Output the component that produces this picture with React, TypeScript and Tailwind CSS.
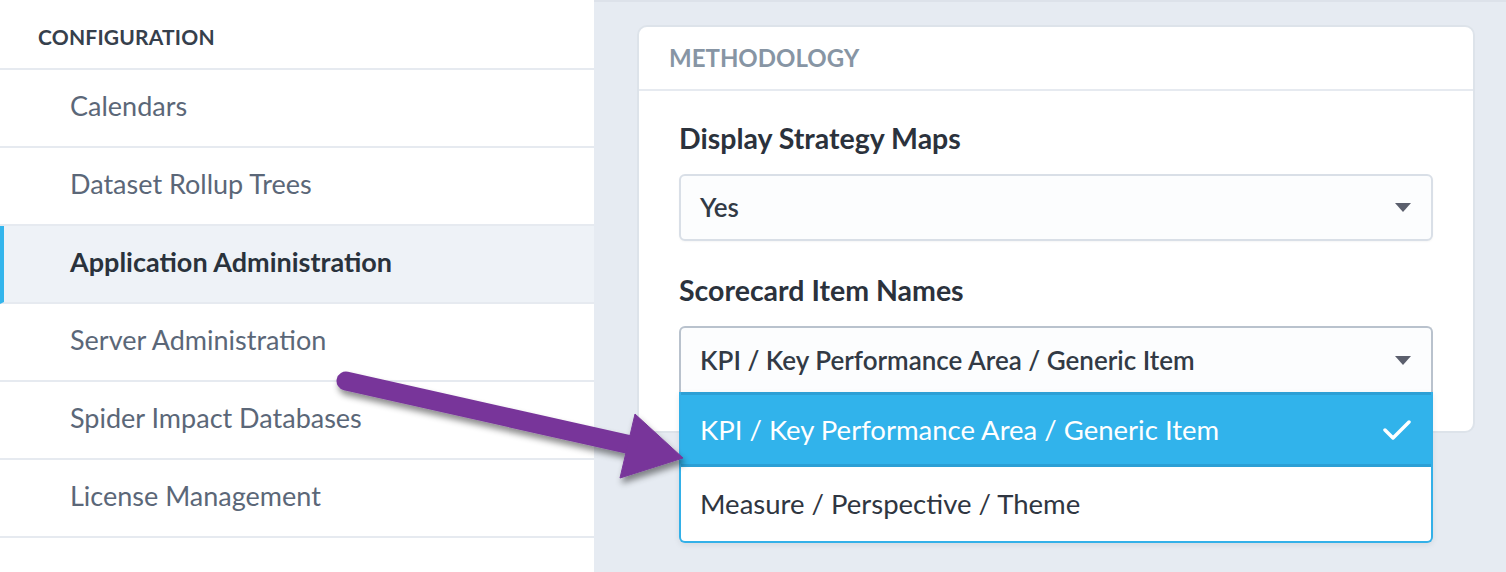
import React from "react";

const navItems = [
  { label: "Calendars", active: false },
  { label: "Dataset Rollup Trees", active: false },
  { label: "Application Administration", active: true },
  { label: "Server Administration", active: false },
  { label: "Spider Impact Databases", active: false },
  { label: "License Management", active: false },
];

function Caret() {
  return (
    <svg width="16" height="9" viewBox="0 0 16 9" className="shrink-0">
      <path d="M0 0 L16 0 L8 9 Z" fill="#5b5f6d" />
    </svg>
  );
}

export default function App() {
  return (
    <div
      className="relative flex h-[572px] w-[1506px] overflow-hidden bg-[#e6ebf2]"
      style={{ fontFamily: "Lato, 'Noto Sans', sans-serif" }}
    >
      {/* Sidebar */}
      <aside className="flex w-[594px] shrink-0 flex-col bg-white">
        <div className="flex h-[70px] items-center border-b-2 border-[#e6eaf0] pl-[38px] pt-[6px]">
          <span className="text-[21px] font-bold tracking-[0.2px] text-[#36404c]">CONFIGURATION</span>
        </div>
        {navItems.map((item) => (
          <div
            key={item.label}
            className={
              item.active
                ? "flex h-[78px] items-center border-b-2 border-[#e6eaf0] border-l-4 border-l-[#33b5ec] bg-[#eef2f7] pl-[66px] pb-[4px]"
                : "flex h-[78px] items-center border-b-2 border-[#e6eaf0] pl-[70px] pb-[4px]"
            }
          >
            <span
              className={
                item.active
                  ? "text-[27px] font-bold text-[#2a323c]"
                  : "text-[27px] text-[#5b6778]"
              }
            >
              {item.label}
            </span>
          </div>
        ))}
      </aside>

      {/* Main */}
      <main className="flex-1 border-t-2 border-[#dde2ea] pl-[43px] pt-[23px] pr-[31px]">
        <div className="relative rounded-[10px] border-2 border-[#dde3ea] bg-white">
          <div className="flex h-[64px] items-center border-b-2 border-[#e6eaf0] pl-[30px]">
            <span className="text-[24px] font-bold text-[#8795a4]">METHODOLOGY</span>
          </div>
          <div className="flex flex-col px-[40px] pt-[30px] pb-[39px]">
            <div className="flex h-[34px] items-center text-[28.5px] font-bold text-[#2b323c]">
              Display Strategy Maps
            </div>
            <div className="mt-[19px] flex h-[67px] items-center justify-between rounded-[6px] border-2 border-[#d9dfe7] bg-[#fcfdfe] pl-[19px] pr-[20px] shadow-[0_1px_2px_rgba(0,0,0,0.04)]">
              <span className="text-[26px] font-semibold text-[#323a45]">Yes</span>
              <Caret />
            </div>
            <div className="mt-[32px] flex h-[34px] items-center text-[28.5px] font-bold text-[#2b323c]">
              Scorecard Item Names
            </div>
            <div className="relative mt-[19px]">
              <div className="flex h-[66px] items-center justify-between rounded-t-[6px] border-2 border-b-0 border-[#b9c2cd] bg-[#fcfdfe] pl-[19px] pr-[20px]">
                <span className="text-[26px] font-semibold text-[#323a45]">
                  KPI / Key Performance Area / Generic Item
                </span>
                <Caret />
              </div>
              {/* Dropdown menu */}
              <div className="absolute left-0 right-0 top-[66px] z-10 flex flex-col overflow-hidden rounded-b-[6px] border-2 border-t-0 border-[#33b0e8] bg-white shadow-[0_2px_6px_rgba(0,0,0,0.08)]">
                <div className="flex h-[75px] items-center justify-between border-y-[3px] border-y-[#2c9fd5] bg-[#31b3eb] pl-[19px] pr-[20px]">
                  <span className="text-[27.5px] text-white">KPI / Key Performance Area / Generic Item</span>
                  <svg width="28" height="22" viewBox="0 0 28 22">
                    <path d="M2 11 L10 19 L26 3" fill="none" stroke="white" strokeWidth="3.5" strokeLinecap="round" strokeLinejoin="round" />
                  </svg>
                </div>
                <div className="flex h-[74px] items-center pl-[19px]">
                  <span className="text-[27.5px] text-[#2f3641]">Measure / Perspective / Theme</span>
                </div>
              </div>
            </div>
          </div>
        </div>
      </main>

      {/* Annotation arrow */}
      <svg
        className="pointer-events-none absolute left-0 top-0 z-20"
        width="1506"
        height="572"
        viewBox="0 0 1506 572"
      >
        <defs>
          <filter id="sh" x="-10%" y="-30%" width="130%" height="180%">
            <feDropShadow dx="2" dy="5" stdDeviation="3" floodColor="#000" floodOpacity="0.45" />
          </filter>
        </defs>
        <g filter="url(#sh)" fill="#78369a" stroke="#78369a">
          <line x1="346" y1="381" x2="640" y2="447" strokeWidth="19" strokeLinecap="round" />
          <polygon points="635,414 683,458 620,478" strokeWidth="1" strokeLinejoin="round" />
        </g>
      </svg>
    </div>
  );
}
